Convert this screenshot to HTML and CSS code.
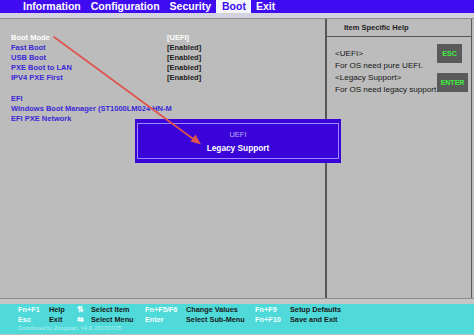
FILE: index.html
```html
<!DOCTYPE html>
<html lang="en">
<head>
<meta charset="UTF-8">
<meta name="viewport" content="width=device-width, initial-scale=1.0">
<title>BIOS Boot Menu</title>
<link rel="stylesheet" href="styles.css">
</head>
<body>
<div class="screen">
  <div class="menubar">
    <span class="tab">Information</span>
    <span class="tab">Configuration</span>
    <span class="tab">Security</span>
    <span class="tab active">Boot</span>
    <span class="tab">Exit</span>
  </div>
  <div class="strip"></div>

  <div class="main">
    <div class="left-pane">
      <div class="row selected"><span class="name">Boot Mode</span><span class="value">[UEFI]</span></div>
      <div class="row"><span class="name">Fast Boot</span><span class="value">[Enabled]</span></div>
      <div class="row"><span class="name">USB Boot</span><span class="value">[Enabled]</span></div>
      <div class="row"><span class="name">PXE Boot to LAN</span><span class="value">[Enabled]</span></div>
      <div class="row"><span class="name">IPV4 PXE First</span><span class="value">[Enabled]</span></div>
      <div class="row"></div>
      <div class="row"><span class="name">EFI</span></div>
      <div class="row"><span class="name">Windows Boot Manager (ST1000LM024 HN-M</span></div>
      <div class="row"><span class="name">EFI PXE Network</span></div>
    </div>

    <div class="right-pane">
      <div class="help-title">Item Specific Help</div>
      <div class="help-body">
        <div class="help-text">
          <div>&lt;UEFI&gt;</div>
          <div>For OS need pure UEFI.</div>
          <div>&lt;Legacy Support&gt;</div>
          <div>For OS need legacy support.</div>
        </div>
        <div class="keys">
          <div class="key esc">ESC</div>
          <div class="key enter">ENTER</div>
        </div>
      </div>
    </div>
  </div>
  <div class="gap-strip"></div>

  <div class="footer">
    <div class="legend">
      <span class="k">Fn+F1</span><span class="d">Help</span><span class="k arrows">&#8645;</span><span class="d">Select Item</span>
      <span class="k">Fn+F5/F6</span><span class="d">Change Values</span><span class="k">Fn+F9</span><span class="d">Setup Defaults</span>
      <span class="k">Esc</span><span class="d">Exit</span><span class="k arrows">&#8646;</span><span class="d">Select Menu</span>
      <span class="k">Enter</span><span class="d">Select Sub-Menu</span><span class="k">Fn+F10</span><span class="d">Save and Exit</span>
    </div>
    <div class="credit">Contributed by Zongquan, V4.8, 2017/07/25</div>
  </div>

  <!-- popup that sits over the panes -->
  <div class="popup">
    <div class="popup-inner">
      <div class="opt">UEFI</div>
      <div class="opt current">Legacy Support</div>
    </div>
  </div>

  <!-- red annotation arrow -->
  <svg class="annotation" width="474" height="335" viewBox="0 0 474 335">
    <line x1="54" y1="37" x2="196" y2="141" stroke="#e0524c" stroke-width="1.6" stroke-linecap="round"/>
    <polygon points="201,144.5 190.5,141.5 195.5,134.5" fill="#e0524c"/>
  </svg>
</div>
</body>
</html>
```

FILE: styles.css
```css
body {
  margin: 0;
  font-family: "Liberation Sans", Arial, sans-serif;
  background: #bcbcbc;
}

.screen {
  position: relative;
  width: 474px;
  height: 335px;
  overflow: hidden;
  background: #bcbcbc;
}

/* top menu */
.menubar {
  display: flex;
  height: 13px;
  padding-left: 18px;
  background: #3f0cf2;
}

.tab {
  padding: 0 5px;
  font-size: 10.5px;
  font-weight: bold;
  line-height: 13px;
  color: #ffffff;
}

.tab.active {
  padding: 0 5px 0 6px;
  background: #f4f4fb;
  color: #3f0cf2;
}

.strip {
  height: 5px;
  background: #d3d3df;
  border-bottom: 1px solid #8e8e8e;
}

/* panes */
.main {
  display: grid;
  grid-template-columns: 327px 145px;
  height: 279px;
}

.left-pane {
  padding: 13.6px 0 0 11px;
  border-right: 2px solid #555555;
}

.row {
  display: flex;
  height: 10.2px;
  font-size: 7.5px;
  font-weight: bold;
  line-height: 10.2px;
  white-space: nowrap;
}

.name {
  width: 156px;
  color: #3a28d6;
}

.value {
  color: #1c1c1c;
}

.row.selected .name,
.row.selected .value {
  color: #ffffff;
}

.right-pane {
  border-right: 1px solid #5a5a5a;
}

.help-title {
  height: 17px;
  padding-left: 17px;
  font-size: 7.5px;
  font-weight: bold;
  line-height: 17px;
  color: #1c1c1c;
  border-bottom: 1px solid #555555;
}

.help-body {
  display: flex;
  padding-left: 8px;
}

.help-text {
  width: 102px;
  padding-top: 11px;
  font-size: 8.1px;
  line-height: 12px;
  color: #151515;
  white-space: nowrap;
}

.keys {
  display: flex;
  flex-direction: column;
  align-items: flex-start;
  gap: 10px;
  padding-top: 7px;
}

.key {
  height: 19px;
  background: #5a5a5a;
  color: #3ff03a;
  font-size: 7px;
  font-weight: bold;
  line-height: 19px;
  text-align: center;
}

.key.esc {
  width: 25px;
}

.key.enter {
  width: 31px;
}

.gap-strip {
  height: 5px;
  background: #c6c6c6;
  border-top: 1px solid #8c8c8c;
}

/* bottom legend */
.footer {
  height: 30px;
  padding: 1.3px 0 0 18px;
  box-sizing: border-box;
  background: #4fd9d9;
}

.legend {
  display: grid;
  grid-template-columns: 31px 28px 14px 54px 41px 69px 35px 1fr;
  font-size: 7.3px;
  font-weight: bold;
  line-height: 9.5px;
  white-space: nowrap;
}

.k {
  color: #f2ffff;
}

.k.arrows {
  font-size: 8px;
}

.d {
  color: #1a1a1a;
}

.credit {
  font-size: 5.3px;
  line-height: 8px;
  color: #b6f2f2;
}

/* overlays */
.popup {
  position: absolute;
  left: 135px;
  top: 119px;
  width: 206px;
  height: 44px;
  padding: 4px 2px;
  box-sizing: border-box;
  background: #3a04d8;
}

.popup-inner {
  height: 100%;
  box-sizing: border-box;
  border: 1px solid #9a88ff;
  padding-top: 4px;
  text-align: center;
}

.opt {
  font-size: 7.5px;
  line-height: 13.5px;
  color: #b9b0f2;
}

.opt.current {
  font-size: 8.3px;
  font-weight: bold;
  color: #ffffff;
}

.annotation {
  position: absolute;
  left: 0;
  top: 0;
  pointer-events: none;
}
```
